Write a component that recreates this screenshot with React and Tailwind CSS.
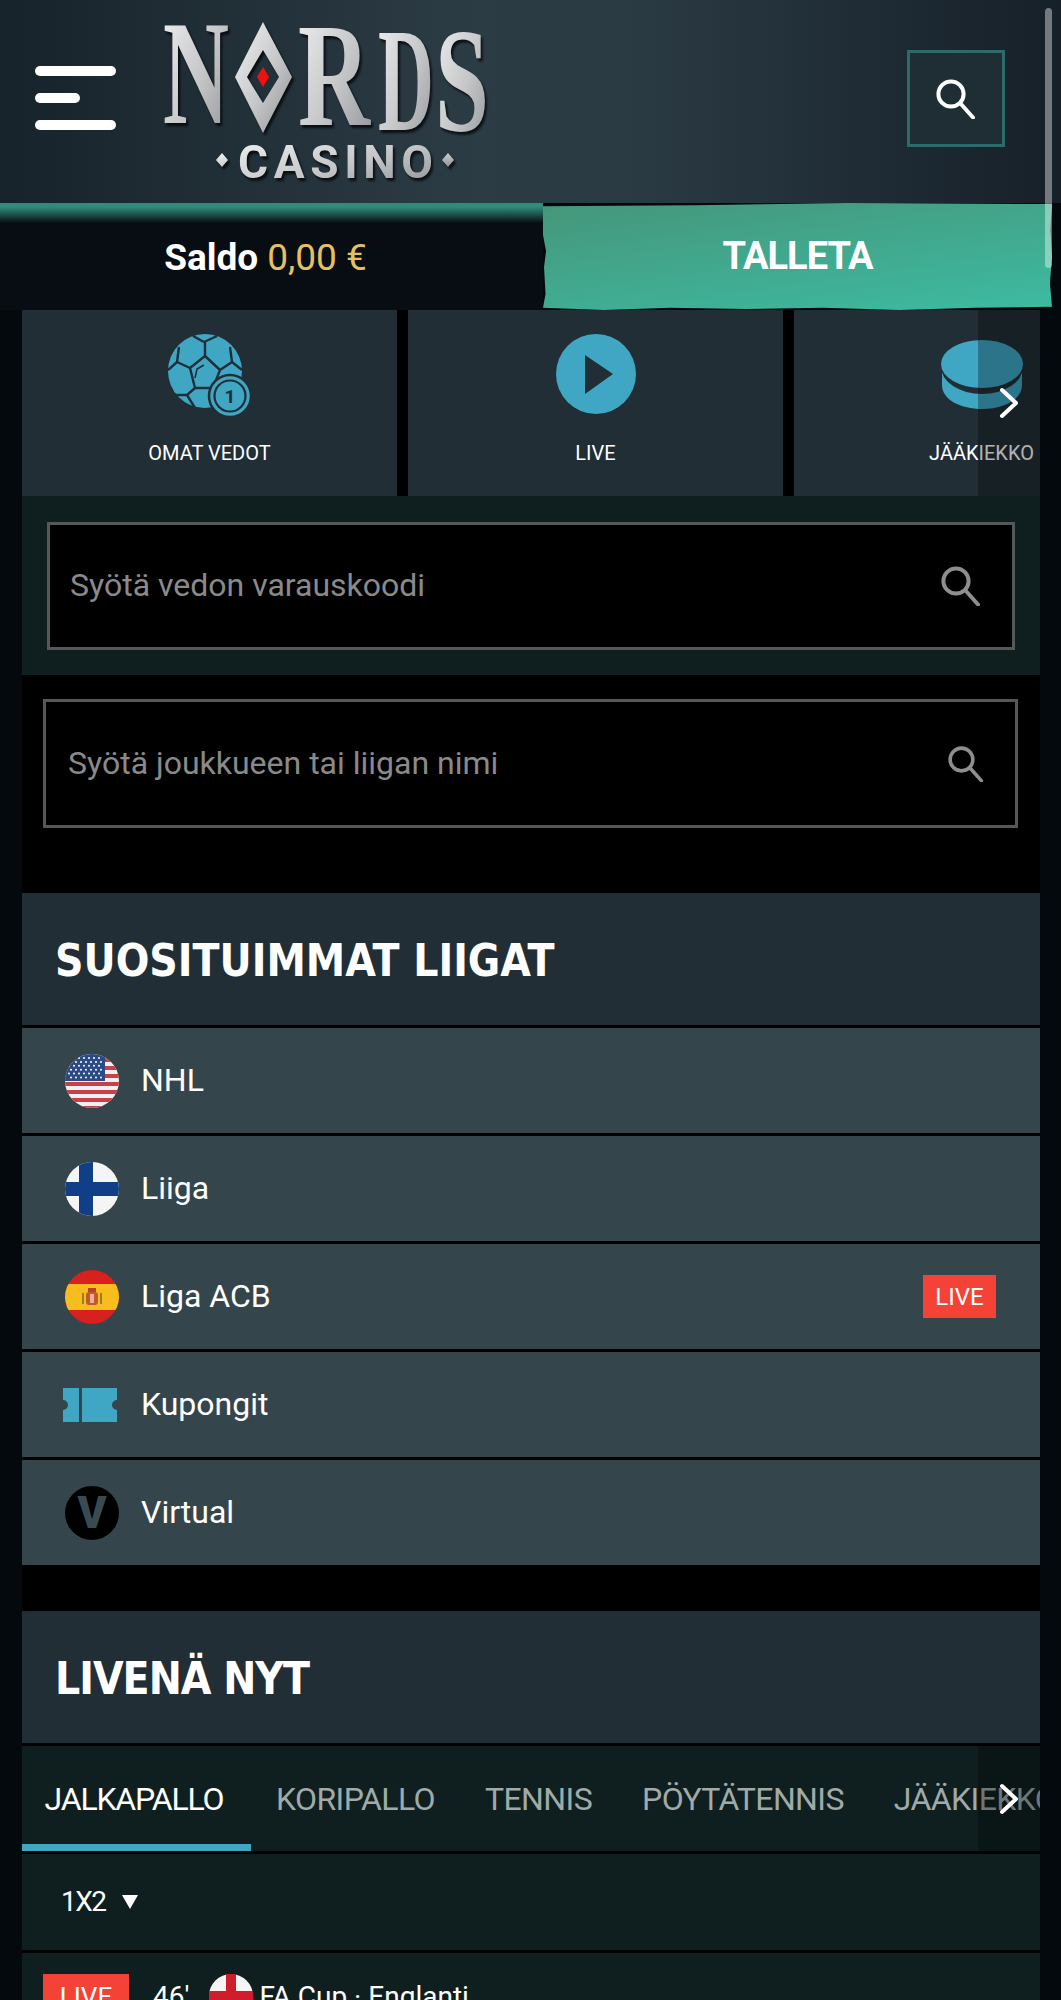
const rowBase = "flex h-[105px] items-center bg-[#35454c] pl-[43px] pr-[44px]"

function SearchGlyph({ size, className }) {
  return (
    <svg width={size} height={size} viewBox="0 0 40 40" fill="none" stroke="currentColor" strokeWidth="4" strokeLinecap="round" className={className}>
      <circle cx="15" cy="15" r="12.6" />
      <path d="M24.5 24.5 37 38.5" />
    </svg>
  )
}

function Chevron() {
  return (
    <svg width="20" height="32" viewBox="0 0 20 32" fill="none" stroke="#fff" strokeWidth="4" strokeLinecap="round" strokeLinejoin="round">
      <path d="M3 3 17 16 3 29" />
    </svg>
  )
}

function UsFlag() {
  const stars = []
  for (let r = 0; r < 6; r++) {
    for (let c = 0; c < 7; c++) {
      stars.push(<circle key={r + "-" + c} cx={4 + c * 5 + (r % 2) * 2} cy={4 + r * 3.9} r="1" fill="#fff" />)
    }
  }
  return (
    <svg width="54" height="54" viewBox="0 0 54 54">
      <clipPath id="us"><circle cx="27" cy="27" r="27" /></clipPath>
      <g clipPath="url(#us)">
        <rect width="54" height="54" fill="#f0f0f0" />
        {[4, 12, 20, 28, 36, 44, 52].map((y) => (
          <rect key={y} x="0" y={y} width="54" height="4" fill="#c8404a" />
        ))}
        <rect width="40" height="27" fill="#2b4a86" />
        {stars}
      </g>
    </svg>
  )
}

function FiFlag() {
  return (
    <svg width="54" height="54" viewBox="0 0 54 54">
      <clipPath id="fi"><circle cx="27" cy="27" r="27" /></clipPath>
      <g clipPath="url(#fi)">
        <rect width="54" height="54" fill="#f5f5f5" />
        <rect x="14" width="14" height="54" fill="#103f88" />
        <rect y="20" width="54" height="14" fill="#103f88" />
      </g>
    </svg>
  )
}

function EsFlag() {
  return (
    <svg width="54" height="54" viewBox="0 0 54 54">
      <clipPath id="es"><circle cx="27" cy="27" r="27" /></clipPath>
      <g clipPath="url(#es)">
        <rect width="54" height="54" fill="#d8201f" />
        <rect y="14" width="54" height="26" fill="#f7bd1e" />
        <rect x="21" y="22" width="12" height="13" rx="3" fill="#c05a28" />
        <rect x="23" y="18" width="8" height="4" fill="#b8441f" />
        <rect x="25" y="24" width="4" height="9" fill="#e8b0a0" />
        <rect x="17" y="23" width="2" height="11" fill="#9a7a30" />
        <rect x="35" y="23" width="2" height="11" fill="#9a7a30" />
      </g>
    </svg>
  )
}

function TicketIcon() {
  return (
    <svg width="56" height="34" viewBox="0 0 56 34">
      <path d="M1 0H17V34H1V22a5 5 0 0 0 0-10Z" fill="#3fa7c4" />
      <path d="M20 0H55V12a5 5 0 0 0 0 10V34H20Z" fill="#3fa7c4" />
    </svg>
  )
}

function VirtualIcon() {
  return (
    <div className="flex h-[54px] w-[54px] items-center justify-center rounded-full bg-black text-[44px] font-black leading-none text-[#3a4a52]">
      V
    </div>
  )
}

function BallIcon() {
  return (
    <svg width="84" height="84" viewBox="0 0 84 84" fill="none" className="-mb-[3px]">
      <circle cx="37" cy="37" r="37" fill="#3fa7c4" />
      <g stroke="#1f2e38" strokeWidth="2.4" strokeLinejoin="round">
        <path d="M37 22 52 36 45 54 27 54 22 34Z" />
        <path d="M37 22V8M36 8 25 2M36 8 49 2M22 34 9 28M9 28 11 13M9 28 0 36" />
        <path d="M27 54 19 61M19 61 6 61M19 61 27 74M52 36 64 28M64 28 62 13M64 28 74 36M45 54 44 72" />
      </g>
      <path d="M27 44 29 35 36 31" stroke="#1f2e38" strokeWidth="1.6" />
      <circle cx="62" cy="62" r="21" fill="#3fa7c4" stroke="#212e36" strokeWidth="2.5" />
      <circle cx="62" cy="62" r="15.5" fill="none" stroke="#212e36" strokeWidth="2.2" />
      <text x="62" y="69" textAnchor="middle" fontSize="19" fontWeight="700" fontFamily="Roboto, sans-serif" fill="#212e36">1</text>
    </svg>
  )
}

function PlayIcon() {
  return (
    <svg width="82" height="82" viewBox="0 0 82 82">
      <circle cx="41" cy="41" r="40" fill="#3fa7c4" />
      <path d="M30 22 58 41 30 61Z" fill="#212e36" />
    </svg>
  )
}

function PuckIcon() {
  return (
    <svg width="82" height="70" viewBox="0 0 82 70" className="mb-[5px]">
      <path d="M1 30V45C1 60 20 69 41 69S81 60 81 45V30Z" fill="#3fa7c4" />
      <ellipse cx="41" cy="27" rx="41" ry="27" fill="#212e36" />
      <ellipse cx="41" cy="24" rx="41" ry="24" fill="#3fa7c4" />
    </svg>
  )
}

function Logo() {
  return (
    <svg width="340" height="185" viewBox="0 0 340 185" className="ml-[47px] mt-[6px] shrink-0">
      <defs>
        <linearGradient id="silver" x1="0" y1="0" x2="1" y2="1">
          <stop offset="0" stopColor="#f2f2f2" />
          <stop offset="0.55" stopColor="#c4c6c8" />
          <stop offset="1" stopColor="#8f9295" />
        </linearGradient>
      </defs>
      <g fill="url(#silver)" style={{ filter: "drop-shadow(2px 3px 1px rgba(0,0,0,.7))" }}>
        <g fontFamily="'Liberation Serif', serif" fontWeight="700" fontSize="148">
          <text x="0" y="117" textLength="66" lengthAdjust="spacingAndGlyphs">N</text>
          <text x="135" y="119" textLength="72" lengthAdjust="spacingAndGlyphs">R</text>
          <text x="215" y="124" textLength="56" lengthAdjust="spacingAndGlyphs">D</text>
          <text x="272" y="125" textLength="54" lengthAdjust="spacingAndGlyphs">S</text>
        </g>
        <path fillRule="evenodd" d="M100 16 129 71 100 127 72 71ZM100 44 84 71 100 97 116 71Z" />
        <text x="75" y="172" textLength="195" lengthAdjust="spacing" fontFamily="Roboto, sans-serif" fontWeight="700" fontSize="46">CASINO</text>
        <path d="M59 147 65 154 59 161 53 154ZM285 147 291 154 285 161 279 154Z" />
      </g>
      <path d="M100 61 106 71 100 81 94 71Z" fill="#f01010" />
    </svg>
  )
}

function LeagueRow({ icon, name, live }) {
  return (
    <div className={rowBase}>
      <div className="flex w-[76px] shrink-0 items-center">{icon}</div>
      <span className="-mt-[2px] text-[32px] text-white">{name}</span>
      {live && (
        <span className="ml-auto flex h-[43px] w-[73px] items-center justify-center bg-[#f44336] text-[24px] text-white">
          LIVE
        </span>
      )}
    </div>
  )
}

function ScrollHint() {
  return (
    <div className="absolute bottom-0 right-0 top-0 flex w-[62px] items-center justify-center bg-black/30">
      <Chevron />
    </div>
  )
}

function Tile({ icon, label }) {
  return (
    <div className="flex h-[186px] w-[375px] shrink-0 flex-col items-center bg-[#212e36]">
      <div className="flex h-[105px] w-full items-end justify-center">{icon}</div>
      <span className="mt-[26px] text-[20px] leading-[24px] text-white">{label}</span>
    </div>
  )
}

function SearchBox({ text, outer, iconSize }) {
  return (
    <div className={"flex items-center justify-between border-[3px] border-[#54585a] bg-black " + outer}>
      <span className="-mt-[2px] text-[32px] text-[#8a8a8a]">{text}</span>
      <SearchGlyph size={iconSize} className="text-[#8e8e8e]" />
    </div>
  )
}

function SectionTitle({ children, className }) {
  return (
    <div className="flex h-[132px] items-center bg-[#212e36] pl-[33px] pt-[3px]">
      <h2 className={"font-['DejaVu_Sans_Condensed',sans-serif] text-[44px] font-bold text-white " + className}>{children}</h2>
    </div>
  )
}

export default function App() {
  const tabs = ["KORIPALLO", "TENNIS", "PÖYTÄTENNIS", "JÄÄKIEKKO"]

  return (
    <div className="relative h-[2000px] w-[1061px] overflow-hidden bg-[#04090d] font-[Roboto,sans-serif]">
      {/* top bar */}
      <header className="flex h-[203px] items-start bg-[linear-gradient(90deg,#17232b,#2c3c45_45%,#2a3a43_60%,#162029)]">
        <div className="ml-[35px] mt-[66px] flex w-[81px] shrink-0 flex-col gap-[17px]">
          <span className="h-[10px] w-[81px] rounded-full bg-white" />
          <span className="h-[10px] w-[45px] rounded-full bg-white" />
          <span className="h-[10px] w-[81px] rounded-full bg-white" />
        </div>
        <Logo />
        <div className="ml-auto mr-[56px] mt-[50px] flex h-[97px] w-[98px] items-center justify-center border-[3px] border-[#2c6a6c] bg-[#1f2e35]">
          <SearchGlyph size={40} className="text-white" />
        </div>
      </header>

      {/* balance + deposit */}
      <div className="flex h-[107px] items-stretch">
        <div className="flex w-[543px] items-center justify-center gap-[9px] bg-[linear-gradient(#2f8b7b,#2f8b7b_4px,#070d12_20px)] pr-[12px] pt-[2px] text-[37px]">
          <span className="font-bold text-white">Saldo</span>
          <span className="text-[#e6c15f]">0,00 €</span>
        </div>
        <div className="flex w-[509px] items-center justify-center bg-[linear-gradient(172deg,#45967a,#3dbba2)] text-[38px] font-bold tracking-[-1px] text-white [clip-path:polygon(0_3%,30%_2%,60%_0,100%_1%,99.7%_25%,100%_50%,99.6%_75%,100%_97%,85%_98%,70%_100%,55%_98%,40%_99%,25%_98%,12%_100%,0_98%,0.5%_85%,0.2%_60%,0.6%_45%,0_30%)]">
          TALLETA
        </div>
      </div>

      <main className="mx-[22px] w-[1018px] bg-black">
        <div className="relative flex gap-[11px] overflow-hidden">
          <Tile icon={<BallIcon />} label="OMAT VEDOT" />
          <Tile icon={<PlayIcon />} label="LIVE" />
          <Tile icon={<PuckIcon />} label="JÄÄKIEKKO" />
          <ScrollHint />
        </div>

        <div className="flex h-[179px] items-start bg-[#0f1f20] px-[25px] pt-[26px]">
          <SearchBox text="Syötä vedon varauskoodi" outer="h-[128px] w-[968px] pl-[20px] pr-[31px]" iconSize={40} />
        </div>

        <div className="h-[218px] px-[21px] pt-[24px]">
          <SearchBox text="Syötä joukkueen tai liigan nimi" outer="h-[129px] w-[975px] pl-[22px] pr-[31px]" iconSize={36} />
        </div>

        <SectionTitle>SUOSITUIMMAT LIIGAT</SectionTitle>
        <div className="mt-[3px] flex flex-col gap-[3px]">
          <LeagueRow icon={<UsFlag />} name="NHL" />
          <LeagueRow icon={<FiFlag />} name="Liiga" />
          <LeagueRow icon={<EsFlag />} name="Liga ACB" live />
          <LeagueRow icon={<div className="-ml-[3px]"><TicketIcon /></div>} name="Kupongit" />
          <LeagueRow icon={<VirtualIcon />} name="Virtual" />
        </div>

        <div className="mt-[46px]">
          <SectionTitle className="tracking-[-1px]">LIVENÄ NYT</SectionTitle>
        </div>

        <div className="relative mt-[3px] flex h-[105px] items-center overflow-hidden bg-[#0f1f20] text-[32px]">
          <div className="relative flex h-full w-[229px] shrink-0 items-center justify-center pr-[5px] tracking-[-1.2px] text-white">
            JALKAPALLO
            <span className="absolute bottom-0 left-0 h-[7px] w-full bg-[#3fa7c4]" />
          </div>
          <div className="ml-[25px] flex shrink-0 gap-[50px] tracking-[-0.6px] text-[#a0aaa8]">
            {tabs.map((t) => (
              <span key={t}>{t}</span>
            ))}
          </div>
          <ScrollHint />
        </div>

        <div className="mt-[3px] flex h-[96px] items-center gap-[16px] bg-[#0f1f20] pl-[39px]">
          <span className="text-[28px] tracking-[-1.5px] text-white">1X2</span>
          <svg width="16" height="14" viewBox="0 0 16 14"><path d="M0 0H16L8 14Z" fill="#fff" /></svg>
        </div>

        <div className="mt-[3px] flex h-[60px] items-start bg-[#0f1f20] pl-[21px] pt-[21px]">
          <span className="flex h-[46px] w-[86px] shrink-0 items-center justify-center bg-[#f44336] text-[26px] text-white">LIVE</span>
          <span className="ml-[24px] text-[28px] leading-[46px] text-white">46'</span>
          <svg width="44" height="44" viewBox="0 0 44 44" className="ml-[20px] shrink-0">
            <circle cx="22" cy="22" r="22" fill="#f5f5f5" />
            <path d="M17 0H27V44H17ZM0 17H44V27H0Z" fill="#cf1d2b" />
          </svg>
          <span className="ml-[6px] text-[28px] leading-[46px] text-white">FA Cup · Englanti</span>
        </div>
      </main>

      {/* scrollbar */}
      <div className="absolute right-[9px] top-[8px] h-[260px] w-[7px] rounded-full bg-white/40" />
    </div>
  )
}
